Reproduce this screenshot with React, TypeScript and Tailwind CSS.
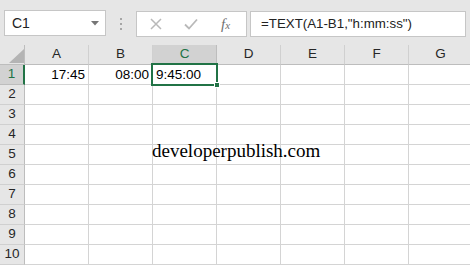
import React from "react";

const cols = ["A", "B", "C", "D", "E", "F", "G"];
const rows = [1, 2, 3, 4, 5, 6, 7, 8, 9, 10];

export default function App() {
  return (
    <div
      className="relative w-[470px] h-[266px] overflow-hidden bg-white text-[#000]"
      style={{ fontFamily: '"Liberation Sans", Arial, sans-serif' }}
    >
      {/* Top bar */}
      <div className="h-[45px] bg-[#e6e6e6] flex items-start pt-[10px]">
        <div className="ml-[4px] w-[102px] h-[26px] bg-white border border-[#c6c6c6] flex items-center pl-[7px] pr-[6px] justify-between">
          <span className="text-[14px] text-[#222]">C1</span>
          <svg width="8" height="5" viewBox="0 0 8 5">
            <polygon points="0,0 8,0 4,4.5" fill="#767676" />
          </svg>
        </div>
        <div className="w-[30px] h-[26px] flex flex-col items-center justify-center gap-[3px] pt-[2px]">
          <div className="w-[2px] h-[2px] bg-[#a6a6a6]" />
          <div className="w-[2px] h-[2px] bg-[#a6a6a6]" />
          <div className="w-[2px] h-[2px] bg-[#a6a6a6]" />
        </div>
        <div className="mt-[1px] w-[111px] h-[26px] bg-white border border-[#c6c6c6] flex items-center">
          <svg className="ml-[13px]" width="12" height="12" viewBox="0 0 12 12">
            <path d="M1 1 L11 11 M11 1 L1 11" stroke="#b9b9b9" strokeWidth="1.5" fill="none" />
          </svg>
          <svg className="ml-[22px]" width="14" height="12" viewBox="0 0 14 12">
            <path d="M1 6.5 L5 10.5 L13 1.5" stroke="#b9b9b9" strokeWidth="1.8" fill="none" />
          </svg>
          <span
            className="ml-[23px] text-[15px] italic text-[#707070] leading-none"
            style={{ fontFamily: '"Liberation Serif", "Times New Roman", serif' }}
          >
            f<span className="text-[11px]">x</span>
          </span>
        </div>
        <div className="mt-[1px] ml-[3px] w-[216px] h-[26px] bg-white border border-[#c6c6c6] flex items-center pl-[10px]">
          <span className="text-[13.3px] text-[#222] whitespace-nowrap">=TEXT(A1-B1,"h:mm:ss")</span>
        </div>
      </div>

      {/* Grid */}
      <div className="grid grid-cols-[25px_repeat(7,64px)]">
        {/* header row */}
        <div className="h-[20px] bg-[#e6e6e6] border-r border-b border-[#bdbdbd] relative">
          <svg className="absolute left-[9px] top-[4px]" width="15" height="14" viewBox="0 0 15 14">
            <polygon points="15,0 15,14 0,14" fill="#b4b4b4" />
          </svg>
        </div>
        {cols.map((c) => (
          <div
            key={c}
            className={
              c === "C"
                ? "h-[20px] bg-[#d2d2d2] border-r border-b border-[#bdbdbd] flex items-center justify-center text-[13.5px] text-[#217346]"
                : "h-[20px] bg-[#e6e6e6] border-r border-b border-[#d0d0d0] border-b-[#bdbdbd] flex items-center justify-center text-[13.5px] text-[#262626]"
            }
          >
            {c}
          </div>
        ))}
        {rows.map((r) => (
          <React.Fragment key={r}>
            <div
              className={
                r === 1
                  ? "h-[20px] bg-[#d2d2d2] border-r-2 border-r-[#217346] border-b border-b-[#bdbdbd] flex items-center justify-center text-[13.5px] text-[#217346]"
                  : "h-[20px] bg-[#e6e6e6] border-r border-r-[#bdbdbd] border-b border-b-[#d0d0d0] flex items-center justify-center text-[13.5px] text-[#262626]"
              }
            >
              {r}
            </div>
            {cols.map((c) => (
              <div
                key={c}
                className="h-[20px] border-r border-b border-[#d4d4d4] flex items-end px-[3px] pb-[1px] text-[13.5px] leading-[17px] whitespace-nowrap overflow-visible"
              >
                {r === 1 && c === "A" && <span className="ml-auto">17:45</span>}
                {r === 1 && c === "B" && <span className="ml-auto">08:00</span>}
                {r === 1 && c === "C" && <span>9:45:00</span>}
              </div>
            ))}
          </React.Fragment>
        ))}
      </div>

      {/* selection */}
      <div className="absolute left-[151px] top-[63px] w-[67px] h-[23px] border-2 border-[#217346] pointer-events-none" />
      <div className="absolute left-[214px] top-[82px] w-[6px] h-[6px] bg-[#217346] border border-white" />

      {/* watermark */}
      <div
        className="absolute left-[152px] top-[139px] text-[19px] leading-[24px] text-black whitespace-nowrap"
        style={{ fontFamily: '"Liberation Serif", "Times New Roman", serif' }}
      >
        developerpublish.com
      </div>
    </div>
  );
}
